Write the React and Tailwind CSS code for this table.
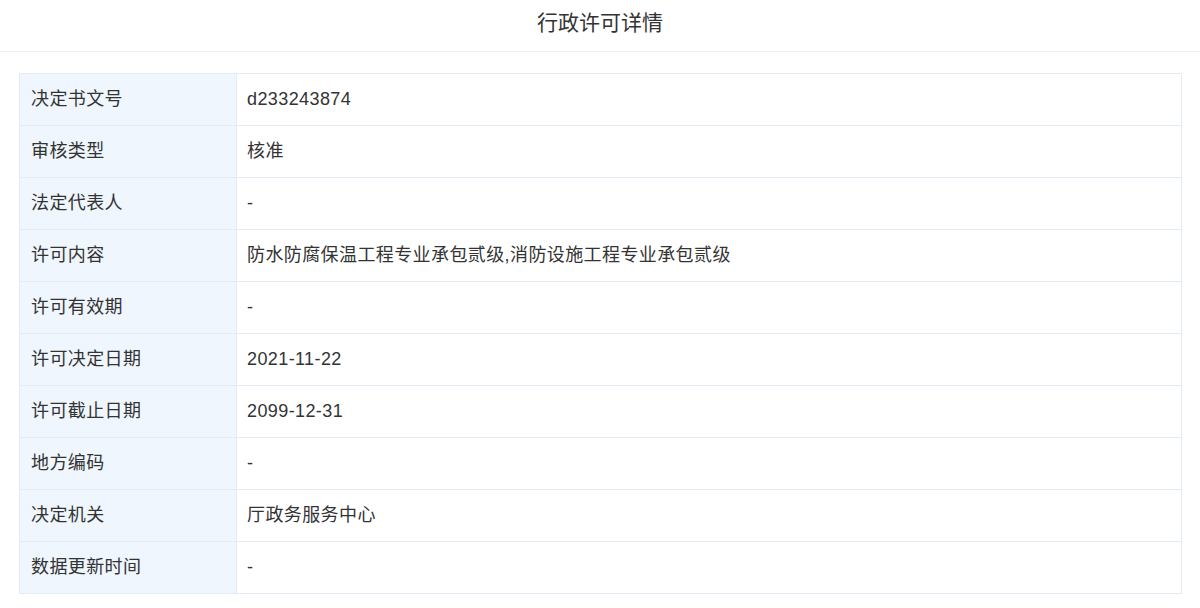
const rows = [
  ["决定书文号", "d233243874"],
  ["审核类型", "核准"],
  ["法定代表人", "-"],
  ["许可内容", "防水防腐保温工程专业承包贰级,消防设施工程专业承包贰级"],
  ["许可有效期", "-"],
  ["许可决定日期", "2021-11-22"],
  ["许可截止日期", "2099-12-31"],
  ["地方编码", "-"],
  ["决定机关", "厅政务服务中心"],
  ["数据更新时间", "-"],
];

export default function App() {
  return (
    <div
      className="min-h-[608px] bg-white text-[#333]"
      style={{ fontFamily: '"Liberation Sans", "Noto Sans CJK SC", sans-serif' }}
    >
      <div className="flex h-[52px] items-center justify-center border-b border-[#eef1f5] pb-[6px] text-[21px]">
        行政许可详情
      </div>
      <div className="px-[19px] pt-[21px]">
        <div className="w-[1163px] border border-[#e3ebf4]">
          {rows.map(([label, value], index) => (
            <div
              key={label}
              className={`flex ${index > 0 ? "h-[52px] border-t border-[#e3ebf4]" : "h-[51px]"}`}
            >
              <div className="flex w-[217px] shrink-0 items-center border-r border-[#e3ebf4] bg-[#eff6fd] pl-[11px] text-[18px] tracking-[0.4px]">
                {label}
              </div>
              <div className="flex flex-1 items-center pl-[10px] text-[18px] tracking-[0.4px]">{value}</div>
            </div>
          ))}
        </div>
      </div>
    </div>
  );
}
